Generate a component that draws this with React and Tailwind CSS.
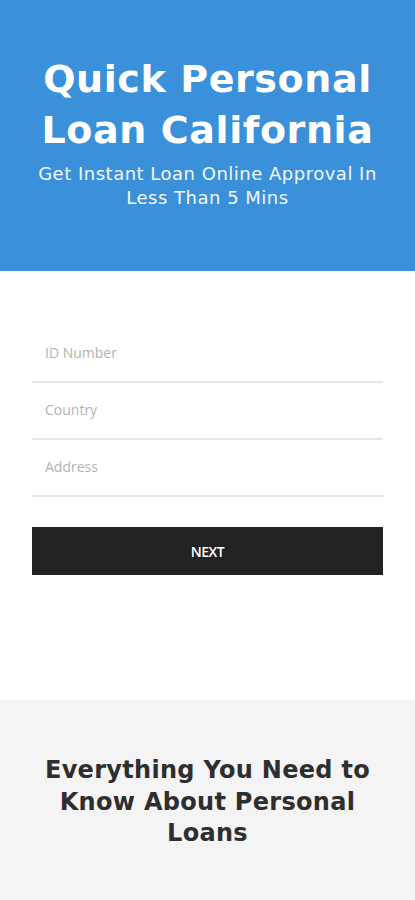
export default function App() {
  return (
    <div className="w-[415px] min-h-[900px] bg-white" style={{ fontFamily: '"Open Sans", sans-serif' }}>
      <div className="h-[271px] bg-[#3b90da] flex flex-col items-center pt-[54px] text-white text-center">
        <h1 className="text-[38px] leading-[51px] font-bold tracking-[0.6px]" style={{ fontFamily: '"DejaVu Sans", sans-serif' }}>
          Quick Personal<br />Loan California
        </h1>
        <p className="mt-[6px] text-[18px] leading-[24px] tracking-[0.5px] text-[#f4f8fd]" style={{ fontFamily: '"DejaVu Sans", sans-serif' }}>
          Get Instant Loan Online Approval In<br />Less Than 5 Mins
        </p>
      </div>
      <div className="px-[32px] pt-[55px]">
        {['ID Number', 'Country', 'Address'].map((p) => (
          <div key={p} className="h-[57px] border-b-2 border-[#e6e6e6] flex items-center pl-[13px] pb-[2px]">
            <span className="text-[14px] text-[#b3b3b3]">{p}</span>
          </div>
        ))}
        <button className="mt-[30px] w-full h-[48px] bg-[#222222] text-white text-[14px] font-semibold tracking-[-0.5px]">NEXT</button>
      </div>
      <div className="mt-[125px] bg-[#f4f4f4] h-[200px] pt-[55px] text-center">
        <h2 className="text-[24px] leading-[31.5px] font-semibold text-[#2e2e2e] px-10 tracking-[0.3px]" style={{ fontFamily: '"DejaVu Sans", sans-serif' }}>
          Everything You Need to Know About Personal Loans
        </h2>
      </div>
    </div>
  );
}
